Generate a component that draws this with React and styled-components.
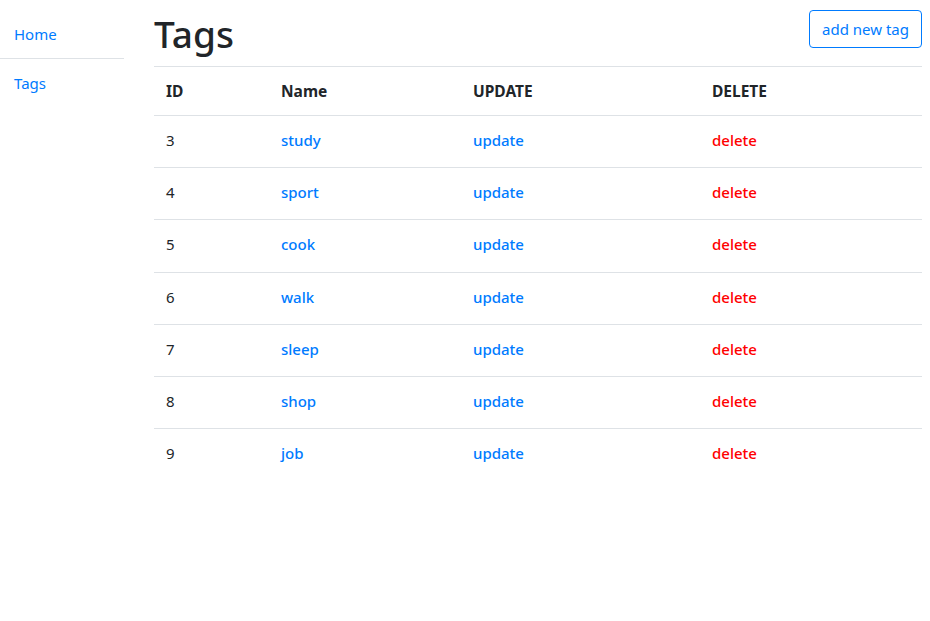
import React from 'react';
import styled, { createGlobalStyle } from 'styled-components';

const GlobalStyle = createGlobalStyle`
  body {
    margin: 0;
    background: #fff;
    color: #212529;
    font-family: "Noto Sans", "Open Sans", sans-serif;
    font-size: 16px;
  }
`;

const Layout = styled.div`
  display: flex;
  gap: 30px;
  padding-right: 8px;
`;

const Sidebar = styled.nav`
  width: 124px;
  flex-shrink: 0;
  padding-top: 10px;
  display: flex;
  flex-direction: column;
`;

const SideLink = styled.a`
  display: flex;
  align-items: center;
  height: 48px;
  padding: 0 14px;
  color: #007bff;
  text-decoration: none;
  font-size: 15px;
  border-bottom: ${props => (props.$divider ? '1px solid #dee2e6' : 'none')};
`;

const Main = styled.main`
  flex: 1;
`;

const Header = styled.div`
  display: flex;
  justify-content: space-between;
  align-items: flex-start;
  padding-top: 10px;
`;

const Title = styled.h1`
  margin: 0 0 8px;
  font-size: 37px;
  font-weight: 500;
  line-height: 48px;
`;

const OutlineButton = styled.button`
  height: 38px;
  padding: 0 12px;
  background: #fff;
  border: 1px solid #007bff;
  border-radius: 4px;
  color: #007bff;
  font-family: inherit;
  font-size: 15px;
  cursor: pointer;
`;

const Table = styled.table`
  width: 100%;
  border-collapse: collapse;
  table-layout: fixed;
`;

const Th = styled.th`
  padding: 12px;
  line-height: 24px;
  text-align: left;
  font-size: 15.5px;
  font-weight: 700;
  border-top: 1px solid #dee2e6;
  border-bottom: 1px solid #dee2e6;
`;

const Td = styled.td`
  padding: 12px 12px 15.2px;
  line-height: 24px;
  font-size: 15px;
  border-bottom: ${props => (props.$last ? 'none' : '1px solid #dee2e6')};
`;

const CellLink = styled.a`
  color: ${props => (props.$danger ? '#ff0000' : '#007bff')};
  font-weight: 500;
  text-decoration: none;
  cursor: pointer;
`;

const tags = [
  { id: 3, name: 'study' },
  { id: 4, name: 'sport' },
  { id: 5, name: 'cook' },
  { id: 6, name: 'walk' },
  { id: 7, name: 'sleep' },
  { id: 8, name: 'shop' },
  { id: 9, name: 'job' },
];

const App = () => {
  return (
    <>
      <GlobalStyle />
      <Layout>
        <Sidebar>
          <SideLink href="#" $divider>Home</SideLink>
          <SideLink href="#">Tags</SideLink>
        </Sidebar>
        <Main>
          <Header>
            <Title>Tags</Title>
            <OutlineButton>add new tag</OutlineButton>
          </Header>
          <Table>
            <colgroup>
              <col style={{ width: '115px' }} />
              <col style={{ width: '192px' }} />
              <col style={{ width: '239px' }} />
              <col />
            </colgroup>
            <thead>
              <tr>
                <Th>ID</Th>
                <Th>Name</Th>
                <Th>UPDATE</Th>
                <Th>DELETE</Th>
              </tr>
            </thead>
            <tbody>
              {tags.map((tag, i) => {
                const last = i === tags.length - 1;
                return (
                  <tr key={tag.id}>
                    <Td $last={last}>{tag.id}</Td>
                    <Td $last={last}><CellLink>{tag.name}</CellLink></Td>
                    <Td $last={last}><CellLink>update</CellLink></Td>
                    <Td $last={last}><CellLink $danger>delete</CellLink></Td>
                  </tr>
                );
              })}
            </tbody>
          </Table>
        </Main>
      </Layout>
    </>
  );
};

export default App;
